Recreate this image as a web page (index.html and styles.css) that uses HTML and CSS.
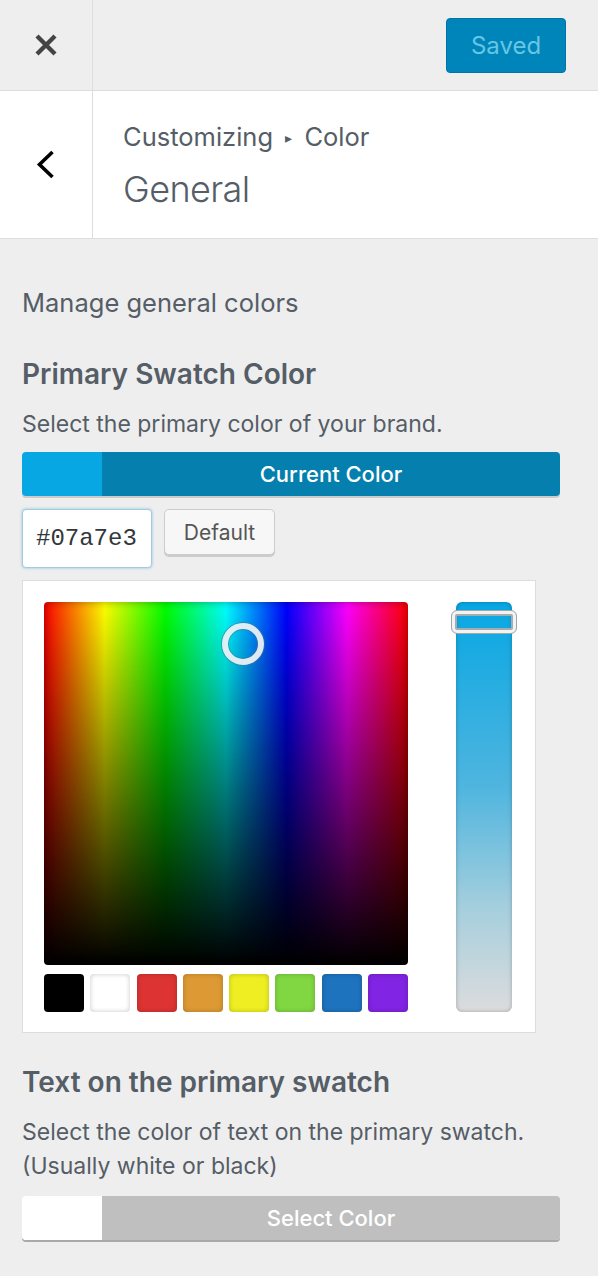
FILE: index.html
```html
<!DOCTYPE html>
<html lang="en">
<head>
<meta charset="utf-8">
<title>Customizing Color: General</title>
<link rel="stylesheet" href="styles.css">
</head>
<body>
<div class="panel">
  <header class="topbar">
    <div class="close-cell">
      <svg class="icon-close" width="22" height="22" viewBox="0 0 22 22" aria-hidden="true">
        <path d="M2 2 L20 20 M20 2 L2 20" stroke="#444" stroke-width="4.4" fill="none"/>
      </svg>
    </div>
    <div class="actions">
      <button class="saved-btn" type="button">Saved</button>
    </div>
  </header>

  <section class="section-head">
    <div class="back-cell">
      <svg class="icon-back" width="20" height="30" viewBox="0 0 20 30" aria-hidden="true">
        <path d="M16.5 2 L3.5 14.5 L16.5 27" stroke="#000" stroke-width="3.6" fill="none"/>
      </svg>
    </div>
    <div class="titles">
      <div class="crumb">Customizing <span class="tri">&#9656;</span> Color</div>
      <h2 class="title">General</h2>
    </div>
  </section>

  <main class="content">
    <p class="section-desc">Manage general colors</p>

    <div class="control">
      <h3 class="control-title">Primary Swatch Color</h3>
      <p class="control-desc">Select the primary color of your brand.</p>
      <div class="color-result">
        <span class="result-swatch" style="background:#07a7e3"></span>
        <span class="result-label">Current Color</span>
      </div>
      <div class="input-row">
        <input class="hex-input" type="text" value="#07a7e3">
        <button class="default-btn" type="button">Default</button>
      </div>
      <div class="picker">
        <div class="picker-main">
          <div class="square"><span class="square-handle"></span></div>
          <div class="palette">
            <span class="pal" style="background:#000000"></span>
            <span class="pal" style="background:#ffffff"></span>
            <span class="pal" style="background:#dd3333"></span>
            <span class="pal" style="background:#dd9933"></span>
            <span class="pal" style="background:#eeee22"></span>
            <span class="pal" style="background:#81d742"></span>
            <span class="pal" style="background:#1e73be"></span>
            <span class="pal" style="background:#8224e3"></span>
          </div>
        </div>
        <div class="slider"><span class="slider-handle"></span></div>
      </div>
    </div>

    <div class="control control-second">
      <h3 class="control-title">Text on the primary swatch</h3>
      <p class="control-desc">Select the color of text on the primary swatch. (Usually white or black)</p>
      <div class="color-result color-result-empty">
        <span class="result-swatch" style="background:#ffffff"></span>
        <span class="result-label">Select Color</span>
      </div>
    </div>
  </main>
</div>
</body>
</html>
```

FILE: styles.css
```css
* { box-sizing: border-box; }

html, body {
  margin: 0;
  padding: 0;
  background: #eeeeee;
}

body {
  font-family: Inter, "Noto Sans", sans-serif;
  color: #555d66;
  width: 598px;
  height: 1276px;
  overflow: hidden;
}

.topbar {
  display: flex;
  height: 91px;
  border-bottom: 1px solid #dddddd;
  background: #eeeeee;
}

.close-cell {
  width: 93px;
  border-right: 1px solid #dddddd;
  display: flex;
  align-items: center;
  justify-content: center;
}

.actions {
  flex: 1;
  display: flex;
  align-items: center;
  justify-content: flex-end;
  padding-right: 32px;
}

.saved-btn {
  width: 120px;
  height: 55px;
  background: #0085ba;
  border: 1px solid #0073aa;
  border-radius: 4px;
  color: #66c6e4;
  font-family: Inter, "Noto Sans", sans-serif;
  font-size: 24px;
  padding: 0;
}

.section-head {
  display: flex;
  height: 148px;
  background: #ffffff;
  border-bottom: 1px solid #dddddd;
}

.back-cell {
  width: 93px;
  border-right: 1px solid #dddddd;
  display: flex;
  align-items: center;
  justify-content: center;
}

.titles {
  padding: 29px 0 0 30px;
}

.crumb {
  font-size: 25.5px;
  line-height: 34px;
  color: #555d66;
}

.tri {
  font-size: 14px;
  vertical-align: 3px;
  margin: 0 5px;
}

.title {
  margin: 0;
  font-size: 36px;
  font-weight: 300;
  line-height: 34px;
  margin-top: 17px;
  color: #555d66;
  letter-spacing: -0.6px;
}

.content {
  padding: 0 38px 0 22px;
}

.section-desc {
  margin: 47px 0 0;
  font-size: 25.5px;
  line-height: 34px;
}

.control-title {
  margin: 37px 0 0;
  font-size: 28px;
  font-weight: 600;
  line-height: 34px;
}

.control-desc {
  margin: 16px 0 0;
  font-size: 23px;
  line-height: 34px;
}

.color-result {
  display: flex;
  height: 44px;
  margin-top: 11px;
  border-radius: 4px;
  overflow: hidden;
  box-shadow: 0 2px 0 #cccccc;
}

.result-swatch {
  width: 80px;
  flex: none;
}

.result-label {
  flex: 1;
  display: flex;
  align-items: center;
  justify-content: center;
  background: #0580ae;
  color: #ffffff;
  font-size: 22px;
  font-weight: 500;
}

.color-result-empty {
  margin-top: 13px;
  box-shadow: 0 2px 0 #a9a9a9;
}

.color-result-empty .result-label {
  background: #bfbfbf;
}

.input-row {
  display: flex;
  align-items: flex-start;
  margin-top: 13px;
}

.hex-input {
  width: 130px;
  height: 59px;
  border: 1px solid #9fcbe3;
  border-radius: 4px;
  box-shadow: 0 0 3px rgba(30, 140, 190, 0.45);
  background: #ffffff;
  font-family: "Liberation Mono", "DejaVu Sans Mono", monospace;
  font-size: 24px;
  color: #32373c;
  padding: 0 0 0 13px;
  margin: 0;
}

.default-btn {
  margin-left: 12px;
  width: 111px;
  height: 46px;
  background: #f7f7f7;
  border: 1px solid #cccccc;
  border-radius: 5px;
  box-shadow: 0 2px 0 #cccccc;
  color: #555555;
  font-family: Inter, "Noto Sans", sans-serif;
  font-size: 21px;
  padding: 0;
}

.picker {
  display: flex;
  width: 514px;
  margin-top: 12px;
  padding: 21px 22px 20px 21px;
  background: #ffffff;
  border: 1px solid #dddddd;
}

.picker-main {
  width: 364px;
}

.square {
  position: relative;
  height: 363px;
  border-radius: 4px;
  background:
    linear-gradient(to bottom, rgba(0, 0, 0, 0) 0%, #000000 100%),
    linear-gradient(to right, #ff0000 0%, #ffff00 16.66%, #00ff00 33.33%, #00ffff 50%, #0000ff 66.66%, #ff00ff 83.33%, #ff0000 100%);
  box-shadow: inset 0 0 8px rgba(0, 0, 0, 0.35);
}

.square-handle {
  position: absolute;
  left: 178px;
  top: 21px;
  width: 42px;
  height: 42px;
  border-radius: 50%;
  border: 6px solid rgba(232, 240, 246, 0.95);
  box-shadow: 0 0 0 1px rgba(90, 110, 125, 0.55), inset 0 0 0 1px rgba(90, 110, 125, 0.55);
}

.palette {
  display: flex;
  justify-content: space-between;
  margin-top: 9px;
}

.pal {
  width: 40px;
  height: 38px;
  border-radius: 4px;
  box-shadow: inset 0 0 5px rgba(0, 0, 0, 0.22);
}

.slider {
  position: relative;
  width: 56px;
  height: 410px;
  margin-left: 48px;
  border-radius: 6px;
  background: linear-gradient(to bottom, #07a7e3 0%, #4fb5df 45%, #a6cfdd 75%, #dcdcdd 100%);
  box-shadow: inset 0 0 4px rgba(0, 0, 0, 0.25);
}

.slider-handle {
  position: absolute;
  left: -5px;
  top: 8px;
  width: 66px;
  height: 24px;
  border-radius: 6px;
  border: 1px solid #a0a7ab;
  box-shadow: inset 0 0 0 3px #f1f3f4, inset 0 0 0 5px #a5abaf;
}

.control-second .control-title {
  margin-top: 32px;
}
```
